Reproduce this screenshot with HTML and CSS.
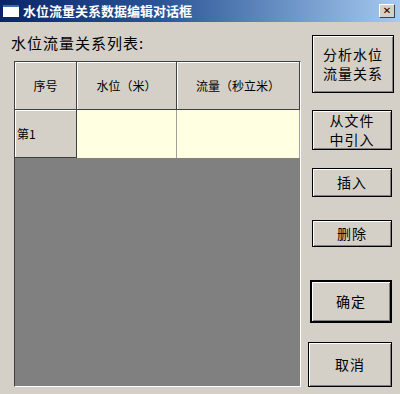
FILE: index.html
```html
<!DOCTYPE html>
<html lang="zh-CN">
<head>
    <meta charset="UTF-8">
    <title>水位流量关系数据编辑对话框</title>
    <link rel="stylesheet" href="styles.css">
</head>
<body>
    <div class="dialog">
        <div class="title-bar">
            <span class="title-icon"></span>
            <span class="title-text">水位流量关系数据编辑对话框</span>
            <button class="close-button">✕</button>
        </div>

        <div class="dialog-body">
            <div class="list-panel">
                <div class="list-label">水位流量关系列表:</div>
                <div class="grid-box">
                    <div class="grid-row grid-head">
                        <div class="cell">序号</div>
                        <div class="cell">水位（米）</div>
                        <div class="cell">流量（秒立米）</div>
                    </div>
                    <div class="grid-row grid-data">
                        <div class="cell row-head">第1</div>
                        <div class="cell input-cell"></div>
                        <div class="cell input-cell"></div>
                    </div>
                </div>
            </div>

            <div class="button-panel">
                <button class="btn btn-analyse">分析水位<br>流量关系</button>
                <button class="btn btn-import">从文件<br>中引入</button>
                <button class="btn btn-insert">插入</button>
                <button class="btn btn-delete">删除</button>
                <button class="btn btn-ok">确定</button>
                <button class="btn btn-cancel">取消</button>
            </div>
        </div>
    </div>
</body>
</html>
```

FILE: styles.css
```css
* {
    margin: 0;
    padding: 0;
    box-sizing: border-box;
}

body {
    font-family: "Noto Sans CJK SC", sans-serif;
    background: #d4d0c8;
    width: 400px;
    height: 394px;
    overflow: hidden;
    color: #000;
}

.dialog {
    width: 400px;
    height: 394px;
    background: #d4d0c8;
}

.title-bar {
    height: 22px;
    display: flex;
    align-items: center;
    padding: 0 5px 0 3px;
    background: linear-gradient(90deg, #0a246a 0%, #2a5596 40%, #a6caf0 100%);
}

.title-icon {
    width: 16px;
    height: 12px;
    background: #fff;
    border-top: 2px solid #3a6ea5;
    margin-right: 4px;
}

.title-text {
    color: #fff;
    font-size: 13px;
    font-weight: 700;
    line-height: 22px;
    flex: 1;
}

.close-button {
    width: 16px;
    height: 14px;
    background: #d4d0c8;
    border: 1px solid;
    border-color: #fff #404040 #404040 #fff;
    font-size: 10px;
    font-weight: 700;
    line-height: 12px;
    color: #000;
    font-family: "DejaVu Sans", sans-serif;
}

.dialog-body {
    display: flex;
    padding: 0 6px 0 0;
}

.list-panel {
    width: 308px;
    padding-left: 11px;
}

.list-label {
    font-size: 15px;
    letter-spacing: 1px;
    line-height: 20px;
    padding-top: 11px;
    height: 39px;
}

.grid-box {
    margin-left: 3px;
    width: 287px;
    height: 326px;
    background: #808080;
    border: 1px solid;
    border-color: #404040 #fff #fff #404040;
}

.grid-row {
    display: grid;
    grid-template-columns: 62px 100px 123px;
}

.grid-head {
    height: 48px;
}

.grid-data {
    height: 48px;
}

.cell {
    display: flex;
    align-items: center;
    justify-content: center;
    font-size: 12px;
    background: #d4d0c8;
    border-right: 1px solid #404040;
    border-bottom: 1px solid #404040;
}

.grid-head .cell {
    box-shadow: inset 1px 1px 0 #fff;
}

.row-head {
    justify-content: flex-start;
    padding-left: 2px;
    box-shadow: inset 1px 1px 0 #fff;
}

.input-cell {
    background: #ffffe1;
    border-right: 1px solid #a0a0a0;
    border-bottom: none;
}

.button-panel {
    display: flex;
    flex-direction: column;
    align-items: flex-end;
    flex: 1;
}

.btn {
    font-family: "Noto Sans CJK SC", sans-serif;
    font-size: 14px;
    letter-spacing: 1px;
    line-height: 19px;
    width: 82px;
    background: #d4d0c8;
    border: 1px solid #000;
    box-shadow: inset 1px 1px 0 #fff, inset -1px -1px 0 #808080;
    color: #000;
}

.btn-analyse {
    height: 58px;
    margin-top: 13px;
}

.btn-import {
    width: 80px;
    height: 40px;
    margin-top: 17px;
    margin-right: 2px;
}

.btn-insert {
    width: 80px;
    height: 29px;
    margin-top: 18px;
    margin-right: 2px;
}

.btn-delete {
    width: 80px;
    height: 27px;
    margin-top: 23px;
    margin-right: 2px;
}

.btn-ok {
    height: 43px;
    margin-top: 33px;
    margin-right: 2px;
    border: 2px solid #000;
}

.btn-cancel {
    width: 84px;
    height: 45px;
    margin-top: 19px;
    margin-right: 2px;
}
```
